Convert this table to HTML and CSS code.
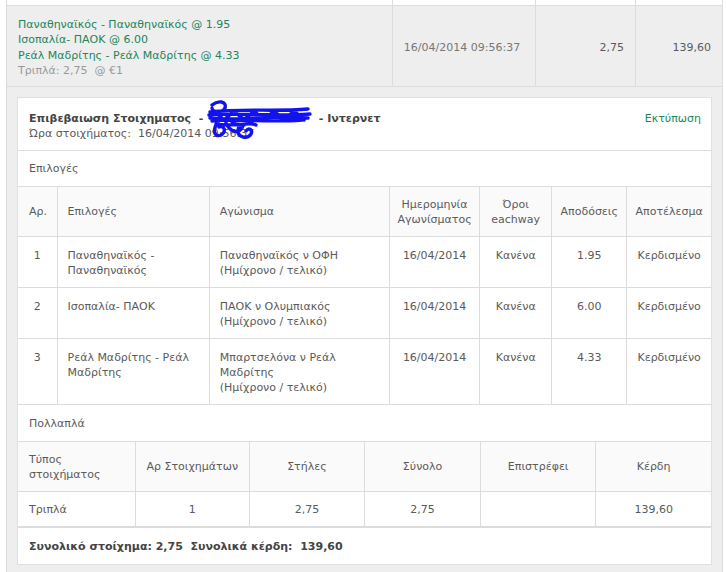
FILE: index.html
```html
<!DOCTYPE html>
<html lang="el">
<head>
    <meta charset="UTF-8">
    <title>Ιστορικό Στοιχημάτων</title>
    <link rel="stylesheet" href="styles.css">
</head>
<body>
    <table class="history">
        <colgroup>
            <col class="c-sel">
            <col class="c-date">
            <col class="c-stake">
            <col class="c-win">
        </colgroup>
        <tr class="spacer">
            <td></td><td></td><td></td><td></td>
        </tr>
        <tr class="bet">
            <td class="sel">
                <div class="pick">Παναθηναϊκός - Παναθηναϊκός @ 1.95</div>
                <div class="pick">Ισοπαλία- ΠΑΟΚ @ 6.00</div>
                <div class="pick">Ρεάλ Μαδρίτης - Ρεάλ Μαδρίτης @ 4.33</div>
                <div class="kind">Τριπλά: 2,75 &nbsp;@ €1</div>
            </td>
            <td class="date">16/04/2014 09:56:37</td>
            <td class="num">2,75</td>
            <td class="num">139,60</td>
        </tr>
        <tr class="details">
            <td colspan="4">
                <div class="receipt">
                    <div class="receipt-head">
                        <div class="head-text">
                            <div class="title">Επιβεβαιωση Στοιχηματος &nbsp;- <span class="redacted"><svg class="scribble" width="110" height="44" viewBox="0 0 110 44"><path d="M8 5 C14 0 23 1 21 8 C19 13 8 13 8 8 M6 12 C40 8 70 12 104 9 M5 15 C30 12 60 17 106 14 M6 18 C40 22 70 14 104 18 M8 21 C30 18 60 23 98 20 M10 11 L20 20 L30 11 L40 20 L50 11 L60 20 L70 11 L80 20 L90 11 L100 20 M14 22 C8 30 10 38 17 35 C23 31 20 25 15 27 M22 23 C26 32 34 34 38 28 C40 24 35 24 34 30 C33 37 43 40 47 34 C49 30 45 27 42 31 M28 22 C34 28 44 21 52 25 M12 24 C22 26 30 24 40 25" fill="none" stroke="#1212ee" stroke-width="3.4" stroke-linecap="round" stroke-linejoin="round"/></svg></span> &nbsp;- Ιντερνετ</div>
                            <div class="time">Ώρα στοιχήματος: &nbsp;16/04/2014 09:56:37</div>
                        </div>
                        <a class="print" href="#">Εκτύπωση</a>
                    </div>

                    <div class="section">Επιλογές</div>
                    <table class="grid legs">
                        <colgroup>
                            <col style="width:39px"><col style="width:152px"><col style="width:180px"><col style="width:90px"><col style="width:72px"><col style="width:75px"><col style="width:84px">
                        </colgroup>
                        <tr class="hd">
                            <th class="left">Αρ.</th>
                            <th class="left">Επιλογές</th>
                            <th class="left">Αγώνισμα</th>
                            <th>Ημερομηνία<br>Αγωνίσματος</th>
                            <th>Όροι<br>eachway</th>
                            <th>Αποδόσεις</th>
                            <th>Αποτέλεσμα</th>
                        </tr>
                        <tr>
                            <td class="mid">1</td>
                            <td>Παναθηναϊκός -<br>Παναθηναϊκός</td>
                            <td>Παναθηναϊκός ν ΟΦΗ<br>(Ημίχρονο / τελικό)</td>
                            <td class="mid">16/04/2014</td>
                            <td class="mid">Κανένα</td>
                            <td class="mid">1.95</td>
                            <td class="mid">Κερδισμένο</td>
                        </tr>
                        <tr>
                            <td class="mid">2</td>
                            <td>Ισοπαλία- ΠΑΟΚ</td>
                            <td>ΠΑΟΚ ν Ολυμπιακός<br>(Ημίχρονο / τελικό)</td>
                            <td class="mid">16/04/2014</td>
                            <td class="mid">Κανένα</td>
                            <td class="mid">6.00</td>
                            <td class="mid">Κερδισμένο</td>
                        </tr>
                        <tr>
                            <td class="mid">3</td>
                            <td>Ρεάλ Μαδρίτης - Ρεάλ<br>Μαδρίτης</td>
                            <td>Μπαρτσελόνα ν Ρεάλ<br>Μαδρίτης<br>(Ημίχρονο / τελικό)</td>
                            <td class="mid">16/04/2014</td>
                            <td class="mid">Κανένα</td>
                            <td class="mid">4.33</td>
                            <td class="mid">Κερδισμένο</td>
                        </tr>
                    </table>

                    <div class="section multi-label">Πολλαπλά</div>
                    <table class="grid multi">
                        <colgroup>
                            <col style="width:117px"><col style="width:114px"><col style="width:115px"><col style="width:116px"><col style="width:115px"><col style="width:115px">
                        </colgroup>
                        <tr class="hd">
                            <th class="left">Τύπος<br>στοιχήματος</th>
                            <th>Αρ Στοιχημάτων</th>
                            <th>Στήλες</th>
                            <th>Σύνολο</th>
                            <th>Επιστρέφει</th>
                            <th>Κέρδη</th>
                        </tr>
                        <tr>
                            <td>Τριπλά</td>
                            <td class="mid">1</td>
                            <td class="mid">2,75</td>
                            <td class="mid">2,75</td>
                            <td class="mid"></td>
                            <td class="mid">139,60</td>
                        </tr>
                    </table>

                    <div class="totals">Συνολικό στοίχημα: 2,75 &nbsp;Συνολικά κέρδη: &nbsp;139,60</div>
                </div>
            </td>
        </tr>
    </table>
</body>
</html>
```

FILE: styles.css
```css
body {
    margin: 0;
    background: #fff;
    font-family: "DejaVu Sans", Verdana, sans-serif;
    font-size: 11px;
    line-height: 15px;
    color: #5a5a5a;
}
.history {
    margin-left: 6px;
    width: 716px;
    border-collapse: collapse;
    table-layout: fixed;
}
.c-sel { width: 386px; }
.c-date { width: 143px; }
.c-stake { width: 100px; }
.c-win { width: 87px; }
.history > tbody > tr > td {
    border: 1px solid #dcdcdc;
    padding: 0;
}
.spacer td {
    height: 5px;
    border-top: none !important;
    background: #fff;
}
.bet td {
    background: #eee;
    height: 77px;
    vertical-align: middle;
}
.bet .sel {
    padding: 3px 11px 0 11px;
}
.pick {
    color: #22855b; /* green selection lines */
    line-height: 15.5px;
}
.kind {
    color: #999;
    line-height: 15.5px;
}
.bet .date {
    text-align: center;
    color: #777;
    padding: 3px 4px 0 0;
}
.bet .num {
    text-align: right;
    padding: 3px 11px 0 0;
}
.details > td {
    background: #eee;
    padding: 10px 10px 9px 10px !important;
    border-bottom: none !important;
}
.receipt {
    background: #fff;
    border: 1px solid #e0e0e0;
}
.receipt-head {
    display: flex;
    justify-content: space-between;
    padding: 13px 10px 9px 11px;
    border-bottom: 1px solid #dcdcdc;
}
.title {
    font-weight: bold;
    color: #444;
}
.redacted {
    display: inline-block;
    width: 104px;
    height: 10px;
    position: relative;
}
.scribble {
    position: absolute;
    left: -3px;
    top: -12px;
}
.print {
    color: #22855b;
    text-decoration: none;
}
.section {
    padding: 10px 11px 10px 11px;
    border-bottom: 1px solid #dcdcdc;
}
.multi-label {
    padding-top: 11px;
}
.grid {
    width: 100%;
    border-collapse: collapse;
    table-layout: fixed;
}
.grid th,
.grid td {
    border: 1px solid #dcdcdc;
    font-weight: normal;
}
.grid tr > :first-child { border-left: none; }
.grid tr > :last-child { border-right: none; }
.grid tr:first-child > * { border-top: none; }
.grid th {
    background: #fafafa;
    text-align: center;
    vertical-align: middle;
    padding: 0 6px;
}
.grid th.left {
    text-align: left;
    padding-left: 10px;
}
.legs .hd th { height: 49px; }
.legs .hd th:first-child { padding-left: 11px; }
.legs td {
    vertical-align: top;
    padding: 11px 6px 9px 10px;
}
.legs td.mid {
    text-align: center;
    padding-left: 4px;
    padding-right: 4px;
}
.multi .hd th { height: 49px; }
.multi .hd th:first-child { padding-left: 11px; }
.multi td {
    height: 34px;
    padding: 0 6px 0 11px;
    vertical-align: middle;
}
.multi td.mid {
    text-align: center;
    padding: 0 4px;
}
.totals {
    border-top: 1px solid #dcdcdc;
    padding: 11px 11px 10px 11px;
    font-weight: bold;
    color: #444;
}
```
